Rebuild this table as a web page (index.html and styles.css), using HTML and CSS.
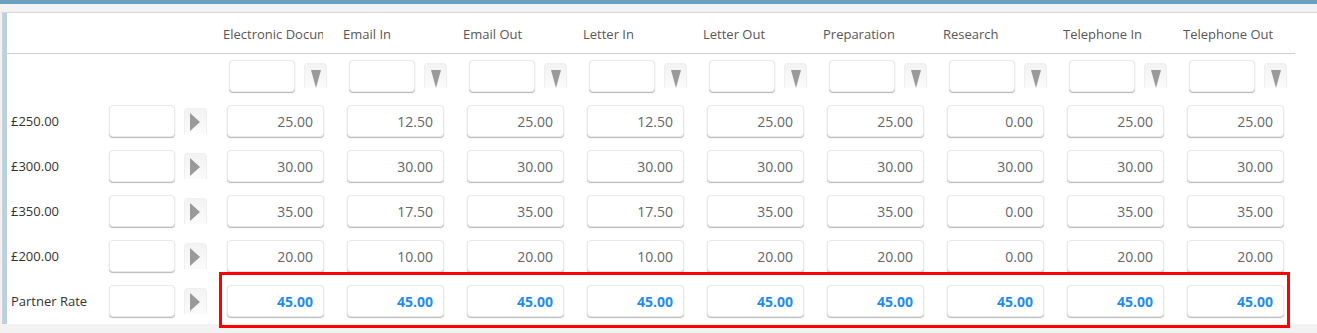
FILE: index.html
```html
<!DOCTYPE html>
<html lang="en">
<head>
<meta charset="utf-8">
<title>Rates</title>
<link rel="stylesheet" href="styles.css">
</head>
<body>
<div class="topbar"></div>
<div class="panel">
  <div class="grid">
    <div class="head-row">
      <div class="hcell lead"></div>
      <div class="hcell"></div>
      <div class="hcell"></div>
      <div class="hcell"><span class="htext">Electronic Document</span></div>
      <div class="hcell"><span class="htext">Email In</span></div>
      <div class="hcell"><span class="htext">Email Out</span></div>
      <div class="hcell"><span class="htext">Letter In</span></div>
      <div class="hcell"><span class="htext">Letter Out</span></div>
      <div class="hcell"><span class="htext">Preparation</span></div>
      <div class="hcell"><span class="htext">Research</span></div>
      <div class="hcell"><span class="htext">Telephone In</span></div>
      <div class="hcell"><span class="htext">Telephone Out</span></div>
    </div>

    <div class="row">
      <div class="cell"></div><div class="cell"></div><div class="cell"></div>
      <div class="cell filter"><div class="fbox"></div><div class="btn down"><svg width="10" height="18" viewBox="0 0 10 18"><polygon points="0,0 10,0 5,18" fill="#9a9a9a"/></svg></div></div>
      <div class="cell filter"><div class="fbox"></div><div class="btn down"><svg width="10" height="18" viewBox="0 0 10 18"><polygon points="0,0 10,0 5,18" fill="#9a9a9a"/></svg></div></div>
      <div class="cell filter"><div class="fbox"></div><div class="btn down"><svg width="10" height="18" viewBox="0 0 10 18"><polygon points="0,0 10,0 5,18" fill="#9a9a9a"/></svg></div></div>
      <div class="cell filter"><div class="fbox"></div><div class="btn down"><svg width="10" height="18" viewBox="0 0 10 18"><polygon points="0,0 10,0 5,18" fill="#9a9a9a"/></svg></div></div>
      <div class="cell filter"><div class="fbox"></div><div class="btn down"><svg width="10" height="18" viewBox="0 0 10 18"><polygon points="0,0 10,0 5,18" fill="#9a9a9a"/></svg></div></div>
      <div class="cell filter"><div class="fbox"></div><div class="btn down"><svg width="10" height="18" viewBox="0 0 10 18"><polygon points="0,0 10,0 5,18" fill="#9a9a9a"/></svg></div></div>
      <div class="cell filter"><div class="fbox"></div><div class="btn down"><svg width="10" height="18" viewBox="0 0 10 18"><polygon points="0,0 10,0 5,18" fill="#9a9a9a"/></svg></div></div>
      <div class="cell filter"><div class="fbox"></div><div class="btn down"><svg width="10" height="18" viewBox="0 0 10 18"><polygon points="0,0 10,0 5,18" fill="#9a9a9a"/></svg></div></div>
      <div class="cell filter"><div class="fbox"></div><div class="btn down"><svg width="10" height="18" viewBox="0 0 10 18"><polygon points="0,0 10,0 5,18" fill="#9a9a9a"/></svg></div></div>
    </div>

    <div class="row">
      <div class="cell label">£250.00</div>
      <div class="cell"><div class="sbox"></div></div>
      <div class="cell"><div class="btn right"><svg width="10" height="18" viewBox="0 0 10 18"><polygon points="0,0 10,9 0,18" fill="#9a9a9a"/></svg></div></div>
      <div class="cell"><div class="vbox">25.00</div></div>
      <div class="cell"><div class="vbox">12.50</div></div>
      <div class="cell"><div class="vbox">25.00</div></div>
      <div class="cell"><div class="vbox">12.50</div></div>
      <div class="cell"><div class="vbox">25.00</div></div>
      <div class="cell"><div class="vbox">25.00</div></div>
      <div class="cell"><div class="vbox">0.00</div></div>
      <div class="cell"><div class="vbox">25.00</div></div>
      <div class="cell"><div class="vbox">25.00</div></div>
    </div>

    <div class="row">
      <div class="cell label">£300.00</div>
      <div class="cell"><div class="sbox"></div></div>
      <div class="cell"><div class="btn right"><svg width="10" height="18" viewBox="0 0 10 18"><polygon points="0,0 10,9 0,18" fill="#9a9a9a"/></svg></div></div>
      <div class="cell"><div class="vbox">30.00</div></div>
      <div class="cell"><div class="vbox">30.00</div></div>
      <div class="cell"><div class="vbox">30.00</div></div>
      <div class="cell"><div class="vbox">30.00</div></div>
      <div class="cell"><div class="vbox">30.00</div></div>
      <div class="cell"><div class="vbox">30.00</div></div>
      <div class="cell"><div class="vbox">30.00</div></div>
      <div class="cell"><div class="vbox">30.00</div></div>
      <div class="cell"><div class="vbox">30.00</div></div>
    </div>

    <div class="row">
      <div class="cell label">£350.00</div>
      <div class="cell"><div class="sbox"></div></div>
      <div class="cell"><div class="btn right"><svg width="10" height="18" viewBox="0 0 10 18"><polygon points="0,0 10,9 0,18" fill="#9a9a9a"/></svg></div></div>
      <div class="cell"><div class="vbox">35.00</div></div>
      <div class="cell"><div class="vbox">17.50</div></div>
      <div class="cell"><div class="vbox">35.00</div></div>
      <div class="cell"><div class="vbox">17.50</div></div>
      <div class="cell"><div class="vbox">35.00</div></div>
      <div class="cell"><div class="vbox">35.00</div></div>
      <div class="cell"><div class="vbox">0.00</div></div>
      <div class="cell"><div class="vbox">35.00</div></div>
      <div class="cell"><div class="vbox">35.00</div></div>
    </div>

    <div class="row">
      <div class="cell label">£200.00</div>
      <div class="cell"><div class="sbox"></div></div>
      <div class="cell"><div class="btn right"><svg width="10" height="18" viewBox="0 0 10 18"><polygon points="0,0 10,9 0,18" fill="#9a9a9a"/></svg></div></div>
      <div class="cell"><div class="vbox">20.00</div></div>
      <div class="cell"><div class="vbox">10.00</div></div>
      <div class="cell"><div class="vbox">20.00</div></div>
      <div class="cell"><div class="vbox">10.00</div></div>
      <div class="cell"><div class="vbox">20.00</div></div>
      <div class="cell"><div class="vbox">20.00</div></div>
      <div class="cell"><div class="vbox">0.00</div></div>
      <div class="cell"><div class="vbox">20.00</div></div>
      <div class="cell"><div class="vbox">20.00</div></div>
    </div>

    <div class="row">
      <div class="cell label">Partner Rate</div>
      <div class="cell"><div class="sbox"></div></div>
      <div class="cell"><div class="btn right"><svg width="10" height="18" viewBox="0 0 10 18"><polygon points="0,0 10,9 0,18" fill="#9a9a9a"/></svg></div></div>
      <div class="cell"><div class="vbox strong">45.00</div></div>
      <div class="cell"><div class="vbox strong">45.00</div></div>
      <div class="cell"><div class="vbox strong">45.00</div></div>
      <div class="cell"><div class="vbox strong">45.00</div></div>
      <div class="cell"><div class="vbox strong">45.00</div></div>
      <div class="cell"><div class="vbox strong">45.00</div></div>
      <div class="cell"><div class="vbox strong">45.00</div></div>
      <div class="cell"><div class="vbox strong">45.00</div></div>
      <div class="cell"><div class="vbox strong">45.00</div></div>
    </div>
  </div>
  <div class="highlight"></div>
</div>
</body>
</html>
```
FILE: styles.css
```css
html, body {
  margin: 0;
  padding: 0;
}
body {
  background: #f2f2f2;
  font-family: "Open Sans", "Liberation Sans", sans-serif;
  color: #333;
  height: 333px;
  overflow: hidden;
}
.topbar {
  height: 4px;
  background: #6a9ec2;
}
.panel {
  position: relative;
  margin-top: 8px;
  margin-left: 2px;
  border-top: 1px solid #d6d6de;
  border-left: 1px solid #cfcfd6;
  background: linear-gradient(to right, #b6d1e3 4px, #ffffff 4px);
  padding-left: 4px;
}
.grid {
  display: grid;
  grid-template-columns: 102px 75px 39px repeat(9, 120px);
  grid-template-rows: 41px;
  grid-auto-rows: 45px;
}
.head-row {
  display: contents;
}
.hcell {
  height: 41px;
  border-bottom: 1px solid #cfcfdb;
  display: flex;
  align-items: center;
  padding-top: 2px;
  box-sizing: border-box;
  font-size: 13px;
  color: #5a5656;
}
.hcell.lead {
  margin-left: -4px;
}
.grid > .head-row > .hcell:last-child {
  margin-right: 8px;
}
.htext {
  display: block;
  width: 100px;
  overflow: hidden;
  white-space: nowrap;
}
.row {
  display: contents;
}
.cell {
  display: flex;
  align-items: flex-start;
  position: relative;
}
.label {
  box-sizing: border-box;
  height: 45px;
  padding-left: 4px;
  padding-bottom: 1px;
  align-items: center;
  font-size: 13px;
  color: #333;
  white-space: nowrap;
}
.fbox, .sbox, .vbox {
  box-sizing: border-box;
  height: 32px;
  margin-top: 6px;
  background: #fff;
  border: 1px solid #e9e9e9;
  border-radius: 4px;
  box-shadow: 0 1px 1px rgba(0, 0, 0, 0.28);
}
.fbox {
  width: 66px;
  margin-left: 6px;
}
.sbox {
  width: 66px;
}
.vbox {
  width: 97px;
  margin-left: 4px;
  display: flex;
  align-items: center;
  justify-content: flex-end;
  padding-right: 10px;
  font-size: 14px;
  color: #666;
}
.vbox.strong {
  color: #1e8cf5;
  font-weight: 700;
}
.btn {
  box-sizing: border-box;
  width: 23px;
  height: 26px;
  margin-top: 9px;
  border: 1px solid #efefef;
  border-bottom: 0;
  border-radius: 4px 4px 0 0;
  background: linear-gradient(#f3f3f3, #fbfbfb);
  display: flex;
  justify-content: center;
  align-items: center;
}
.btn.down {
  margin-left: 9px;
  height: 25px;
}
.btn svg {
  display: block;
}
.btn.down svg {
  margin-top: 5px;
}
.btn.right svg {
  margin-left: -2px;
}
.highlight {
  position: absolute;
  left: 216px;
  top: 259px;
  width: 1071px;
  height: 56px;
  box-sizing: border-box;
  border: 3px solid #ff0000;
}
```
